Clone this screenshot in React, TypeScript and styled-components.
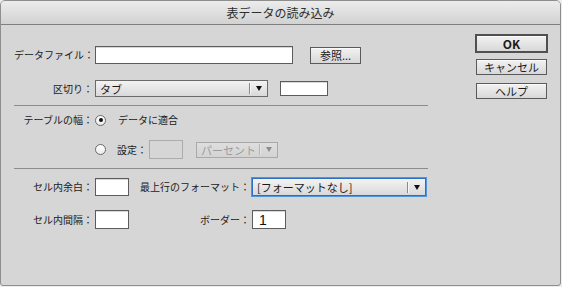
import React from 'react';
import styled, { createGlobalStyle, css } from 'styled-components';

const Global = createGlobalStyle`
  html, body { margin: 0; padding: 0; background: #ededed; }
  body { font-family: "Noto Sans CJK JP", "Noto Sans", sans-serif; color: #1c1c1c; }
  * { box-sizing: border-box; }
`;

const Window = styled.div`
  width: 561px;
  height: 286px;
  border: 1px solid #8e8e8e;
  border-radius: 5px 5px 3px 3px;
  background: #d6d6d6;
  display: flex;
  flex-direction: column;
  overflow: hidden;
`;

const TitleBar = styled.div`
  height: 24px;
  flex: none;
  border-bottom: 1px solid #7f7f7f;
  background: linear-gradient(#ececec, #d2d2d2);
  display: flex;
  align-items: center;
  justify-content: center;
  font-size: 12px;
  line-height: 1;
  color: #2e2e2e;
  padding-top: 1px;
`;

const Body = styled.div`
  flex: 1;
  display: flex;
  justify-content: space-between;
  padding: 0 12px 0 13px;
`;

const Main = styled.div`
  width: 414px;
  display: flex;
  flex-direction: column;
  padding-top: 21px;
`;

const FormGrid = styled.div<{ $cols: string; $rowGap: number; $top: number }>`
  display: grid;
  grid-template-columns: ${(p) => p.$cols};
  column-gap: 2px;
  row-gap: ${(p) => p.$rowGap}px;
  align-items: center;
  margin-top: ${(p) => p.$top}px;
`;

const Label = styled.span`
  font-size: 10px;
  line-height: 12px;
  text-align: right;
  white-space: nowrap;
  color: #1a1a1a;
`;

const Line = styled.div`
  display: flex;
  align-items: center;
`;

const Separator = styled.div<{ $top: number }>`
  height: 1px;
  background: #8c8c8c;
  margin-top: ${(p) => p.$top}px;
`;

const Field = styled.input<{ $w: number; $h: number; $gap?: number }>`
  width: ${(p) => p.$w}px;
  height: ${(p) => p.$h}px;
  margin: 0 0 0 ${(p) => p.$gap ?? 0}px;
  padding: 0 6px;
  border: 1px solid #5c5c5c;
  background: #fff;
  box-shadow: inset 0 1px 0 #d8d8d8;
  font-family: "Liberation Sans", sans-serif;
  font-size: 14px;
  color: #111;
  outline: none;
  &:disabled {
    border-color: #acacac;
    background: #d6d6d6;
    box-shadow: none;
  }
`;

const SelectBox = styled.div<{ $w: number; $h: number; $gap?: number; $disabled?: boolean; $focused?: boolean }>`
  width: ${(p) => p.$w}px;
  height: ${(p) => p.$h}px;
  margin-left: ${(p) => p.$gap ?? 0}px;
  border: 1px solid #6a6a6a;
  background: linear-gradient(#f3f3f3, #d9d9d9);
  display: flex;
  align-items: center;
  font-size: 11px;
  line-height: 12px;
  color: #1a1a1a;
  padding-left: 4px;
  ${(p) =>
    p.$disabled &&
    css`
      border-color: #a9a9a9;
      background: linear-gradient(#dedede, #d3d3d3);
      color: #9c9c9c;
    `}
  ${(p) =>
    p.$focused &&
    css`
      border-color: #2d6fc4;
      box-shadow: 0 0 0 1px #4f95e2;
    `}
`;

const SelectText = styled.span`
  flex: 1;
  white-space: nowrap;
`;

const SelectDivider = styled.span<{ $disabled?: boolean }>`
  width: 1px;
  height: 11px;
  background: ${(p) => (p.$disabled ? '#b4b4b4' : '#8a8a8a')};
  box-shadow: 1px 0 0 ${(p) => (p.$disabled ? '#e4e4e4' : '#f6f6f6')};
`;

const Arrow = styled.span<{ $disabled?: boolean }>`
  width: 17px;
  display: flex;
  justify-content: center;
  &::before {
    content: '';
    border-left: 3.5px solid transparent;
    border-right: 3.5px solid transparent;
    border-top: 5px solid ${(p) => (p.$disabled ? '#8d8d8d' : '#111')};
  }
`;

const Select = ({
  w,
  h,
  gap,
  disabled,
  focused,
  children,
}: {
  w: number;
  h: number;
  gap?: number;
  disabled?: boolean;
  focused?: boolean;
  children: React.ReactNode;
}) => (
  <SelectBox $w={w} $h={h} $gap={gap} $disabled={disabled} $focused={focused}>
    <SelectText>{children}</SelectText>
    <SelectDivider $disabled={disabled} />
    <Arrow $disabled={disabled} />
  </SelectBox>
);

const PushButton = styled.div<{ $w: number; $h: number; $gap?: number; $top?: number; $default?: boolean }>`
  width: ${(p) => p.$w}px;
  height: ${(p) => p.$h}px;
  margin-left: ${(p) => p.$gap ?? 0}px;
  margin-top: ${(p) => p.$top ?? 0}px;
  border: ${(p) => (p.$default ? '2px solid #505050' : '1px solid #5a5a5a')};
  background: linear-gradient(#f2f2f2, #d8d8d8);
  box-shadow: inset 0 1px 0 #fafafa;
  display: flex;
  align-items: center;
  justify-content: center;
  font-size: ${(p) => (p.$default ? 12 : 11)}px;
  line-height: 12px;
  font-weight: ${(p) => (p.$default ? 600 : 400)};
  color: #1a1a1a;
`;

const ButtonColumn = styled.div`
  width: 73px;
  padding-top: 9px;
  display: flex;
  flex-direction: column;
  align-items: center;
  gap: 6px;
`;

const RadioCircle = styled.span<{ $checked?: boolean }>`
  width: 11px;
  height: 11px;
  flex: none;
  border-radius: 50%;
  border: 1px solid #6b6b6b;
  background: linear-gradient(#ffffff, #ececec);
  display: flex;
  align-items: center;
  justify-content: center;
  &::after {
    content: '';
    width: 4px;
    height: 4px;
    border-radius: 50%;
    background: ${(p) => (p.$checked ? '#111' : 'transparent')};
  }
`;

const RadioText = styled.span<{ $gap: number }>`
  margin-left: ${(p) => p.$gap}px;
  font-size: 10px;
  line-height: 12px;
  white-space: nowrap;
  color: #1a1a1a;
`;

export default function App() {
  return (
    <>
      <Global />
      <Window>
        <TitleBar>表データの読み込み</TitleBar>
        <Body>
          <Main>
            <FormGrid $cols="79px auto" $rowGap={16} $top={0}>
              <Label>データファイル：</Label>
              <Line>
                <Field $w={198} $h={18} readOnly />
                <PushButton $w={51} $h={17} $gap={17}>参照...</PushButton>
              </Line>
              <Label>区切り：</Label>
              <Line>
                <Select w={173} h={17}>タブ</Select>
                <Field $w={48} $h={15} $gap={12} readOnly />
              </Line>
            </FormGrid>
            <Separator $top={8} />
            <FormGrid $cols="79px auto" $rowGap={14} $top={8}>
              <Label>テーブルの幅：</Label>
              <Line>
                <RadioCircle $checked />
                <RadioText $gap={12}>データに適合</RadioText>
              </Line>
              <span />
              <Line>
                <RadioCircle />
                <RadioText $gap={11}>設定：</RadioText>
                <Field $w={34} $h={19} $gap={2} disabled />
                <Select w={82} h={16} gap={13} disabled>パーセント</Select>
              </Line>
            </FormGrid>
            <Separator $top={9} />
            <FormGrid $cols="79px 34px 119px auto" $rowGap={14} $top={9}>
              <Label>セル内余白：</Label>
              <Field $w={34} $h={18} readOnly />
              <Label>最上行のフォーマット：</Label>
              <Select w={174} h={18} focused>[フォーマットなし]</Select>
              <Label>セル内間隔：</Label>
              <Field $w={34} $h={19} readOnly />
              <Label>ボーダー：</Label>
              <Field $w={34} $h={19} readOnly defaultValue="1" />
            </FormGrid>
          </Main>
          <ButtonColumn>
            <PushButton $w={73} $h={19} $default>OK</PushButton>
            <PushButton $w={71} $h={16}>キャンセル</PushButton>
            <PushButton $w={71} $h={16} $top={2}>ヘルプ</PushButton>
          </ButtonColumn>
        </Body>
      </Window>
    </>
  );
}
